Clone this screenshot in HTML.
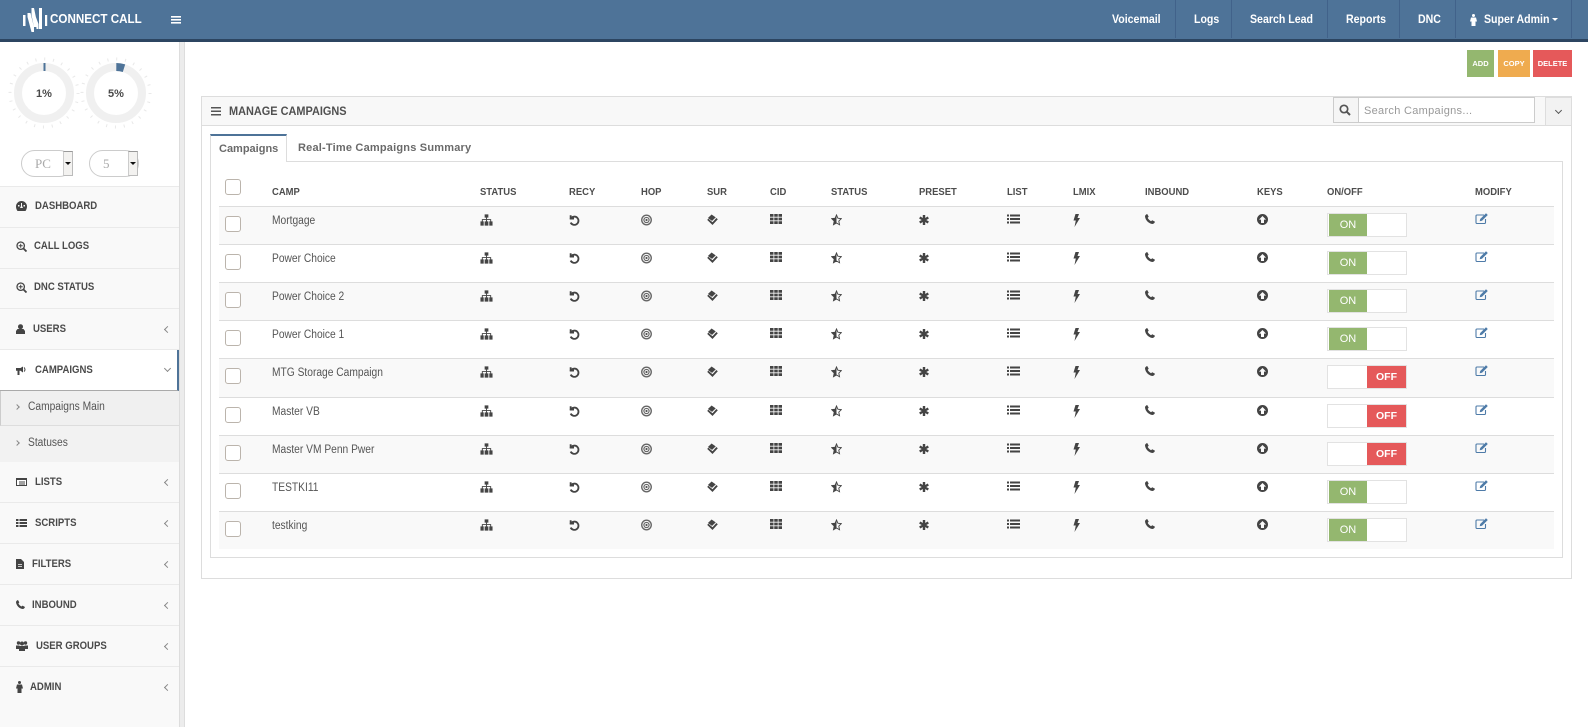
<!DOCTYPE html>
<html><head><meta charset="utf-8"><style>
*{box-sizing:border-box}
html,body{margin:0;padding:0;width:1588px;height:727px;overflow:hidden;background:#fff;font-family:"Liberation Sans",sans-serif;color:#555}
.a,.a>*{position:absolute}
.t{position:absolute;white-space:nowrap}
#top{left:0;top:0;width:1588px;height:42px;background:#4e7398;border-bottom:3px solid #2c4561}
.nv{top:13px;color:#fff;font-weight:bold;font-size:11.5px;line-height:15px;white-space:nowrap;transform:scaleX(.92);transform-origin:left}
.ns{top:0;width:1px;height:38px;background:#41628a}
#side{left:0;top:42px;width:179px;height:685px;background:#fff}
.sb{position:absolute;left:179px;top:42px;width:6px;height:685px;background:#ececec;border-left:1px solid #ddd;border-right:1px solid #ddd}
.m{position:absolute;left:0;width:179px;background:#f9f9f9;border-bottom:1px solid #eaeaea}
.mt{position:absolute;font-weight:bold;font-size:11px;color:#4a4a4a;white-space:nowrap;line-height:14px;transform:scaleX(.87);transform-origin:left}
.ch{position:absolute;left:165px;width:5px;height:5px;border-left:1px solid #888;border-bottom:1px solid #888;transform:rotate(45deg)}
.btn{position:absolute;top:50px;height:27px;color:#fff;font-weight:bold;font-size:7.5px;line-height:27px;text-align:center}
.th{position:absolute;top:185px;font-weight:bold;font-size:10.5px;line-height:14px;color:#4d4d4d;white-space:nowrap;transform:scaleX(.9);transform-origin:left}
.r{position:absolute;left:219px;width:1335px;height:38px;border-top:1px solid #ddd}
.o{background:#f9f9f9}
.r>*{position:absolute}
.cb{left:6px;top:9px;width:16px;height:16px;border:1px solid #bbb4ac;border-radius:3px;background:#fff}
.n{left:53px;top:7px;font-size:11.5px;line-height:14px;color:#555;white-space:nowrap;transform:scaleX(.89);transform-origin:left}
.sm{font-size:11.5px;line-height:14px;color:#555;transform:scaleX(.89);transform-origin:left}
.r svg{top:7px;fill:#444}
.tg{left:1108px;top:6px;width:80px;height:24px;border:1px solid #e2e2e2;background:#fff}
.tg b{position:absolute;top:0;height:22px;line-height:22px;text-align:center;font-size:11px;color:#fff;font-weight:normal}
.on b{left:1px;width:38px;background:#94b76f}
.off b{left:39px;width:39px;background:#e5595a;font-weight:bold;font-size:10.5px}
</style></head><body>
<svg width="0" height="0" style="position:absolute">
<symbol id="i1" viewBox="0 0 14 12"><path d="M5 0h4v3.500H7.500V5H12v2.500h1.500V12h-3.500V7.500h1V6H7.500v1.500H9V12H5V7.500h1.500V6H3v1.500h1V12H.5V7.500H2V5h4.500V3.500H5z"/></symbol>
<symbol id="i2" viewBox="0 0 12 12"><path d="M1.800 .8v3.600h3.600L2.300 4A4.500 4.500 0 1 1 1.800 8.800" fill="none" stroke="#444" stroke-width="2"/></symbol>
<symbol id="i3" viewBox="0 0 12 12"><circle cx="6" cy="6" r="5.200" fill="none" stroke="#666" stroke-width="1.500"/><circle cx="6" cy="6" r="2.800" fill="none" stroke="#666" stroke-width="1.300"/><circle cx="6" cy="6" r="1.200" fill="#555"/></symbol>
<symbol id="i4" viewBox="0 0 12 12"><path d="M5 0 9.500 3.200 5.500 7 1 3.800zM10.200 3.800 11.800 5.200 6 11.500 .2 5.800 1.500 4.600 6 8.400z" fill="#444"/></symbol>
<symbol id="i5" viewBox="0 0 12 10"><path d="M0 0h3.500v2.800H0zM4.250 0h3.500v2.800h-3.500zM8.500 0H12v2.800H8.500zM0 3.600h3.500v2.800H0zM4.250 3.600h3.500v2.800h-3.500zM8.500 3.600H12v2.800H8.500zM0 7.200h3.500V10H0zM4.250 7.200h3.500V10h-3.500zM8.500 7.200H12V10H8.500z"/></symbol>
<symbol id="i6" viewBox="0 0 12 12"><path d="M6 .5 7.500 4 11.300 4.500 8.500 7.200 9.300 11.200 6 9.300 2.700 11.200 3.500 7.200 .7 4.500 4.500 4z" fill="none" stroke="#444" stroke-width="1"/><path d="M6 .5V9.300L2.700 11.200 3.500 7.200 .7 4.500 4.500 4z"/></symbol>
<symbol id="i7" viewBox="0 0 10 10"><path d="M5 0v10M.7 2.500l8.600 5M9.300 2.500.7 7.500" stroke="#444" stroke-width="2.400" fill="none"/></symbol>
<symbol id="i8" viewBox="0 0 13 10"><path d="M0 .5h2v2H0zM3 .5h10v2H3zM0 4h2v2H0zM3 4h10v2H3zM0 7.500h2v2H0zM3 7.500h10v2H3z"/></symbol>
<symbol id="i9" viewBox="0 0 7 13"><path d="M2.500 0H6L4.500 4H7L1.500 13l1.300-6.500H.5z"/></symbol>
<symbol id="i10" viewBox="0 0 10 10"><path d="M2.200 0 3.700 2.600 2.700 3.900C3.400 5.300 4.600 6.500 6 7.200L7.300 6.200 10 7.800C9.600 9 8.700 10 7.500 10 3.500 9.500 .5 6.300 0 2.500 0 1.300 1 .4 2.200 0z"/></symbol>
<symbol id="i11" viewBox="0 0 11 11"><path fill-rule="evenodd" d="M5.500 0a5.500 5.500 0 1 1 0 11 5.500 5.500 0 0 1 0-11zM5.500 2 2 5.600h2V9h3V5.600h2z"/></symbol>
<symbol id="i12" viewBox="0 0 13 11"><path d="M9 2H2a1 1 0 0 0-1 1v6.500a1 1 0 0 0 1 1h7.500a1 1 0 0 0 1-1V6" fill="none" stroke="#4e7ba8" stroke-width="1.100"/><path d="M11 .3 12.800 2 7 7.800 4.700 8.300 5.200 6z" fill="#4e7ba8"/></symbol>
</svg>

<div id="top" class="a">
<svg style="left:21px;top:6px" width="28" height="26" viewBox="0 0 28 26" fill="#fff"><rect x="2" y="9" width="2.500" height="11"/><path d="M6.500 7h3l3.500 14v5h-2.500L6.500 11zM10.500 2h2.500l2.500 12v7h-2.500L10.500 9zM14.500 10l3 8v5h-2z"/><rect x="18" y="2" width="3" height="21"/><rect x="24" y="9" width="2.200" height="11"/></svg>
<div class="t" style="left:50px;top:11px;color:#fff;font-weight:bold;font-size:12.500px;line-height:16px;transform:scaleX(.93);transform-origin:left">CONNECT CALL</div>
<svg style="left:171px;top:16px" width="10" height="8" viewBox="0 0 10 8" fill="#fff"><rect width="10" height="1.600"/><rect y="3" width="10" height="1.600"/><rect y="6" width="10" height="1.600"/></svg>
<div class="nv" style="left:1112px">Voicemail</div><div class="ns" style="left:1175px"></div>
<div class="nv" style="left:1194px">Logs</div><div class="ns" style="left:1231px"></div>
<div class="nv" style="left:1250px">Search Lead</div><div class="ns" style="left:1327px"></div>
<div class="nv" style="left:1346px">Reports</div><div class="ns" style="left:1399px"></div>
<div class="nv" style="left:1418px">DNC</div><div class="ns" style="left:1455px"></div>
<svg style="left:1470px;top:14px" width="7" height="12" viewBox="0 0 7 12" fill="#fff"><circle cx="3.500" cy="1.500" r="1.500"/><path d="M1 3.500h5l1 4H5.500V12h-4V7.500H0z"/></svg>
<div class="nv" style="left:1484px">Super Admin</div>
<div style="left:1552px;top:18px;border:3px solid transparent;border-top-color:#fff;border-bottom:0"></div>
<div class="ns" style="left:1571px"></div>
</div>

<div id="side"></div><div class="sb"></div>
<svg style="position:absolute;left:0;top:50px" width="170" height="90" viewBox="0 0 170 90">
<g fill="none"><circle cx="44" cy="43" r="26" stroke="#f0f0f0" stroke-width="8"/><circle cx="116" cy="43" r="26" stroke="#f0f0f0" stroke-width="8"/>
<circle cx="44" cy="43" r="34" stroke="#e8e8e8" stroke-width="3" stroke-dasharray="1 7.900"/><circle cx="116" cy="43" r="34" stroke="#e8e8e8" stroke-width="3" stroke-dasharray="1 7.900"/>
<path d="M44.500 13v8" stroke="#4e7398" stroke-width="2"/><path d="M116.300 17a26 26 0 0 1 7.700 1.200" stroke="#4e7398" stroke-width="8"/></g>
<text x="44" y="47" text-anchor="middle" font-family="Liberation Sans" font-weight="bold" font-size="11" fill="#4a4a4a">1%</text>
<text x="116" y="47" text-anchor="middle" font-family="Liberation Sans" font-weight="bold" font-size="11" fill="#4a4a4a">5%</text>
</svg>
<div class="t" style="left:21px;top:150px;width:52px;height:27px;border:1px solid #ccc;border-radius:14px;background:#fff;color:#aaa;font-family:'Liberation Serif',serif;font-size:13px;line-height:25px;padding-left:13px">PC</div>
<div class="t" style="left:63px;top:151px;width:10px;height:25px;background:#f3f2f0;border:1px solid #bbb;border-top-color:#999;border-left:1px solid #ccc"><div style="position:absolute;left:1px;top:10px;border:3px solid transparent;border-top:3px solid #111;border-bottom:0"></div></div>
<div class="t" style="left:89px;top:150px;width:50px;height:27px;border:1px solid #ccc;border-radius:14px;background:#fff;color:#aaa;font-family:'Liberation Serif',serif;font-size:13px;line-height:25px;padding-left:13px">5</div>
<div class="t" style="left:128px;top:151px;width:10px;height:25px;background:#f3f2f0;border:1px solid #bbb;border-top-color:#999;border-left:1px solid #ccc"><div style="position:absolute;left:1px;top:10px;border:3px solid transparent;border-top:3px solid #111;border-bottom:0"></div></div>

<div class="m" style="top:186px;height:42px;border-top:1px solid #eaeaea"></div>
<div class="m" style="top:228px;height:41px"></div>
<div class="m" style="top:269px;height:40px"></div>
<div class="m" style="top:309px;height:41px"></div>
<div class="m" style="top:350px;height:41px;background:#fff;border-right:2px solid #4e7398;border-bottom:1px solid #aaa"></div>
<div class="m" style="top:391px;height:35px;background:#f0f0f0;border-left:1px solid #ccc;border-bottom:1px solid #ddd"></div>
<div class="m" style="top:426px;height:36px;background:#f2f2f2;border-bottom:0"></div>
<div class="m" style="top:462px;height:41px"></div>
<div class="m" style="top:503px;height:41px"></div>
<div class="m" style="top:544px;height:41px"></div>
<div class="m" style="top:585px;height:41px"></div>
<div class="m" style="top:626px;height:41px"></div>
<div class="m" style="top:667px;height:60px;border-bottom:0"></div>

<div class="a" style="left:0;top:0">
<svg style="left:16px;top:201px" width="11" height="10" viewBox="0 0 11 10" fill="#444"><path fill-rule="evenodd" d="M5.500 0a5.500 5.500 0 0 1 5.500 5.500c0 1.700-.6 3.300-1.500 4.500h-8C.6 8.800 0 7.200 0 5.500A5.500 5.500 0 0 1 5.500 0zM5 2v3l-1 2h3L6 5V2zM2 4v1.500h1.500V4zM7.500 4v1.500H9V4z"/></svg>
<svg style="left:16px;top:241px" width="11" height="11" viewBox="0 0 11 11" fill="none" stroke="#444"><circle cx="4.700" cy="4.700" r="3.700" stroke-width="1.300"/><path d="M7.500 7.500 10.500 10.500" stroke-width="1.800"/><path d="M4.700 2.700v4M2.700 4.700h4"/></svg>
<svg style="left:16px;top:282px" width="11" height="11" viewBox="0 0 11 11" fill="none" stroke="#444"><circle cx="4.700" cy="4.700" r="3.700" stroke-width="1.300"/><path d="M7.500 7.500 10.500 10.500" stroke-width="1.800"/><path d="M4.700 2.700v4M2.700 4.700h4"/></svg>
<svg style="left:16px;top:324px" width="9" height="10" viewBox="0 0 9 10" fill="#444"><circle cx="4.500" cy="2.700" r="2.500"/><path d="M1.500 5h6L9 7v3H0V7z"/></svg>
<svg style="left:16px;top:366px" width="11" height="9" viewBox="0 0 11 9" fill="#444"><path d="M0 2h4.500L7 .5v6L4.500 4.800H3.500V9h-2V4.800H0z"/><path d="M8 1.500a2.500 2.500 0 0 1 0 4" fill="none" stroke="#444"/></svg>
<svg style="left:16px;top:478px" width="11" height="8" viewBox="0 0 11 8"><rect x=".5" y=".5" width="10" height="7" fill="#fff" stroke="#444"/><path d="M0 0h11v2H0zM3 3.500h6v1H3zM3 5.500h6v1H3z" fill="#444"/></svg>
<svg style="left:16px;top:519px" width="11" height="8" viewBox="0 0 11 8" fill="#444"><path d="M0 0h2.500v2H0zM3.500 0H11v2H3.500zM0 3h2.500v2H0zM3.500 3H11v2H3.500zM0 6h2.500v2H0zM3.500 6H11v2H3.500z"/></svg>
<svg style="left:16px;top:559px" width="8" height="10" viewBox="0 0 8 10" fill="#444"><path d="M0 0h5l3 3v7H0z"/><path d="M2 5h4v.800H2zM2 7h4v.800H2z" fill="#f9f9f9"/></svg>
<svg style="left:16px;top:600px" width="9" height="9" viewBox="0 0 10 10" fill="#444"><use href="#i10"/></svg>
<svg style="left:16px;top:641px" width="12" height="10" viewBox="0 0 12 10" fill="#444"><circle cx="2.500" cy="2" r="1.700"/><circle cx="9.500" cy="2" r="1.700"/><circle cx="6" cy="2.500" r="2"/><path d="M0 4.500h3.500V8H0zM8.500 4.500H12V8H8.500zM3 5h6v5H3z"/></svg>
<svg style="left:16px;top:681px" width="7" height="12" viewBox="0 0 7 12" fill="#444"><circle cx="3.500" cy="1.500" r="1.500"/><path d="M1 3.500h5l1 4H5.500V12h-4V7.500H0z"/></svg>
</div>
<div class="mt" style="left:35px;top:199px">DASHBOARD</div>
<div class="mt" style="left:34px;top:239px">CALL LOGS</div>
<div class="mt" style="left:34px;top:280px">DNC STATUS</div>
<div class="mt" style="left:33px;top:322px">USERS</div><div class="ch" style="top:327px"></div>
<div class="mt" style="left:35px;top:363px">CAMPAIGNS</div><div class="ch" style="top:366px;transform:rotate(-45deg)"></div>
<div class="t sm" style="left:28px;top:400px">Campaigns Main</div>
<div class="ch" style="left:15px;top:405px;width:4px;height:4px;transform:rotate(225deg)"></div>
<div class="t sm" style="left:28px;top:436px">Statuses</div>
<div class="ch" style="left:15px;top:441px;width:4px;height:4px;transform:rotate(225deg)"></div>
<div class="mt" style="left:35px;top:475px">LISTS</div><div class="ch" style="top:480px"></div>
<div class="mt" style="left:35px;top:516px">SCRIPTS</div><div class="ch" style="top:521px"></div>
<div class="mt" style="left:32px;top:557px">FILTERS</div><div class="ch" style="top:562px"></div>
<div class="mt" style="left:32px;top:598px">INBOUND</div><div class="ch" style="top:603px"></div>
<div class="mt" style="left:36px;top:639px">USER GROUPS</div><div class="ch" style="top:644px"></div>
<div class="mt" style="left:30px;top:680px">ADMIN</div><div class="ch" style="top:685px"></div>

<div class="btn" style="left:1467px;width:27px;background:#94b76f">ADD</div>
<div class="btn" style="left:1498px;width:32px;background:#efab4f">COPY</div>
<div class="btn" style="left:1533px;width:39px;background:#e5595a">DELETE</div>

<div class="t" style="left:201px;top:96px;width:1371px;height:483px;border:1px solid #ddd;background:#fff"></div>
<div class="t" style="left:202px;top:97px;width:1369px;height:29px;background:#f8f8f8;border-bottom:1px solid #ddd"></div>
<svg style="position:absolute;left:211px;top:107px" width="10" height="9" viewBox="0 0 10 9" fill="#555"><rect width="10" height="1.500"/><rect y="3.500" width="10" height="1.500"/><rect y="7" width="10" height="1.500"/></svg>
<div class="t" style="left:229px;top:105px;font-weight:bold;font-size:11.500px;line-height:15px;color:#505050;transform:scaleX(.95);transform-origin:left">MANAGE CAMPAIGNS</div>
<div class="t" style="left:1333px;top:97px;width:26px;height:26px;background:#f5f5f5;border:1px solid #ccc"></div>
<svg style="position:absolute;left:1339px;top:104px" width="12" height="12" viewBox="0 0 12 12" fill="none" stroke="#555"><circle cx="5" cy="5" r="3.700" stroke-width="1.700"/><path d="M7.800 7.800 11 11" stroke-width="2"/></svg>
<div class="t" style="left:1358px;top:97px;width:177px;height:26px;background:#fff;border:1px solid #ccc;font-size:11px;letter-spacing:.3px;line-height:26px;color:#999;padding-left:5px">Search Campaigns...</div>
<div class="t" style="left:1545px;top:97px;width:27px;height:29px;background:#f2f2f2;border:1px solid #ddd"></div>
<div class="ch" style="left:1556px;top:108px;width:5px;height:5px;transform:rotate(-45deg);border-color:#555"></div>

<div class="t" style="left:210px;top:161px;width:1353px;height:397px;border:1px solid #ddd;background:#fff"></div>
<div class="t" style="left:210px;top:134px;width:77px;height:28px;background:#fff;border:1px solid #ddd;border-top:2px solid #4e7398;border-bottom:0;font-weight:bold;font-size:11px;line-height:26px;color:#6a6a6a;padding-left:8px">Campaigns</div>
<div class="t" style="left:298px;top:141px;font-weight:bold;font-size:11px;letter-spacing:.2px;line-height:15px;color:#6a6a6a">Real-Time Campaigns Summary</div>

<div class="t" style="left:225px;top:179px;width:16px;height:16px;border:1px solid #bbb4ac;border-radius:3px;background:#fff"></div>
<div class="th" style="left:272px">CAMP</div><div class="th" style="left:480px">STATUS</div><div class="th" style="left:569px">RECY</div><div class="th" style="left:641px">HOP</div><div class="th" style="left:707px">SUR</div><div class="th" style="left:770px">CID</div><div class="th" style="left:831px">STATUS</div><div class="th" style="left:919px">PRESET</div><div class="th" style="left:1007px">LIST</div><div class="th" style="left:1073px">LMIX</div><div class="th" style="left:1145px">INBOUND</div><div class="th" style="left:1257px">KEYS</div><div class="th" style="left:1327px">ON/OFF</div><div class="th" style="left:1475px">MODIFY</div>

<div class="r o" style="top:206px"><i class="cb"></i><span class="n">Mortgage</span><svg style="left:261px" width="13" height="12"><use href="#i1"/></svg><svg style="left:350px" width="11" height="12"><use href="#i2"/></svg><svg style="left:422px" width="11" height="12"><use href="#i3"/></svg><svg style="left:488px" width="11" height="12"><use href="#i4"/></svg><svg style="left:551px" width="12" height="10"><use href="#i5"/></svg><svg style="left:612px" width="11" height="12"><use href="#i6"/></svg><svg style="left:700px;top:8px" width="10" height="10"><use href="#i7"/></svg><svg style="left:788px" width="13" height="10"><use href="#i8"/></svg><svg style="left:854px" width="7" height="13"><use href="#i9"/></svg><svg style="left:926px" width="10" height="10"><use href="#i10"/></svg><svg style="left:1038px" width="11" height="11"><use href="#i11"/></svg><div class="tg on"><b>ON</b></div><svg style="left:1256px;top:6px" width="13" height="11"><use href="#i12"/></svg></div>
<div class="r" style="top:244px"><i class="cb"></i><span class="n">Power Choice</span><svg style="left:261px" width="13" height="12"><use href="#i1"/></svg><svg style="left:350px" width="11" height="12"><use href="#i2"/></svg><svg style="left:422px" width="11" height="12"><use href="#i3"/></svg><svg style="left:488px" width="11" height="12"><use href="#i4"/></svg><svg style="left:551px" width="12" height="10"><use href="#i5"/></svg><svg style="left:612px" width="11" height="12"><use href="#i6"/></svg><svg style="left:700px;top:8px" width="10" height="10"><use href="#i7"/></svg><svg style="left:788px" width="13" height="10"><use href="#i8"/></svg><svg style="left:854px" width="7" height="13"><use href="#i9"/></svg><svg style="left:926px" width="10" height="10"><use href="#i10"/></svg><svg style="left:1038px" width="11" height="11"><use href="#i11"/></svg><div class="tg on"><b>ON</b></div><svg style="left:1256px;top:6px" width="13" height="11"><use href="#i12"/></svg></div>
<div class="r o" style="top:282px"><i class="cb"></i><span class="n">Power Choice 2</span><svg style="left:261px" width="13" height="12"><use href="#i1"/></svg><svg style="left:350px" width="11" height="12"><use href="#i2"/></svg><svg style="left:422px" width="11" height="12"><use href="#i3"/></svg><svg style="left:488px" width="11" height="12"><use href="#i4"/></svg><svg style="left:551px" width="12" height="10"><use href="#i5"/></svg><svg style="left:612px" width="11" height="12"><use href="#i6"/></svg><svg style="left:700px;top:8px" width="10" height="10"><use href="#i7"/></svg><svg style="left:788px" width="13" height="10"><use href="#i8"/></svg><svg style="left:854px" width="7" height="13"><use href="#i9"/></svg><svg style="left:926px" width="10" height="10"><use href="#i10"/></svg><svg style="left:1038px" width="11" height="11"><use href="#i11"/></svg><div class="tg on"><b>ON</b></div><svg style="left:1256px;top:6px" width="13" height="11"><use href="#i12"/></svg></div>
<div class="r" style="top:320px"><i class="cb"></i><span class="n">Power Choice 1</span><svg style="left:261px" width="13" height="12"><use href="#i1"/></svg><svg style="left:350px" width="11" height="12"><use href="#i2"/></svg><svg style="left:422px" width="11" height="12"><use href="#i3"/></svg><svg style="left:488px" width="11" height="12"><use href="#i4"/></svg><svg style="left:551px" width="12" height="10"><use href="#i5"/></svg><svg style="left:612px" width="11" height="12"><use href="#i6"/></svg><svg style="left:700px;top:8px" width="10" height="10"><use href="#i7"/></svg><svg style="left:788px" width="13" height="10"><use href="#i8"/></svg><svg style="left:854px" width="7" height="13"><use href="#i9"/></svg><svg style="left:926px" width="10" height="10"><use href="#i10"/></svg><svg style="left:1038px" width="11" height="11"><use href="#i11"/></svg><div class="tg on"><b>ON</b></div><svg style="left:1256px;top:6px" width="13" height="11"><use href="#i12"/></svg></div>
<div class="r o" style="top:358px;height:39px"><i class="cb"></i><span class="n">MTG Storage Campaign</span><svg style="left:261px" width="13" height="12"><use href="#i1"/></svg><svg style="left:350px" width="11" height="12"><use href="#i2"/></svg><svg style="left:422px" width="11" height="12"><use href="#i3"/></svg><svg style="left:488px" width="11" height="12"><use href="#i4"/></svg><svg style="left:551px" width="12" height="10"><use href="#i5"/></svg><svg style="left:612px" width="11" height="12"><use href="#i6"/></svg><svg style="left:700px;top:8px" width="10" height="10"><use href="#i7"/></svg><svg style="left:788px" width="13" height="10"><use href="#i8"/></svg><svg style="left:854px" width="7" height="13"><use href="#i9"/></svg><svg style="left:926px" width="10" height="10"><use href="#i10"/></svg><svg style="left:1038px" width="11" height="11"><use href="#i11"/></svg><div class="tg off"><b>OFF</b></div><svg style="left:1256px;top:6px" width="13" height="11"><use href="#i12"/></svg></div>
<div class="r" style="top:397px"><i class="cb"></i><span class="n">Master VB</span><svg style="left:261px" width="13" height="12"><use href="#i1"/></svg><svg style="left:350px" width="11" height="12"><use href="#i2"/></svg><svg style="left:422px" width="11" height="12"><use href="#i3"/></svg><svg style="left:488px" width="11" height="12"><use href="#i4"/></svg><svg style="left:551px" width="12" height="10"><use href="#i5"/></svg><svg style="left:612px" width="11" height="12"><use href="#i6"/></svg><svg style="left:700px;top:8px" width="10" height="10"><use href="#i7"/></svg><svg style="left:788px" width="13" height="10"><use href="#i8"/></svg><svg style="left:854px" width="7" height="13"><use href="#i9"/></svg><svg style="left:926px" width="10" height="10"><use href="#i10"/></svg><svg style="left:1038px" width="11" height="11"><use href="#i11"/></svg><div class="tg off"><b>OFF</b></div><svg style="left:1256px;top:6px" width="13" height="11"><use href="#i12"/></svg></div>
<div class="r o" style="top:435px"><i class="cb"></i><span class="n">Master VM Penn Pwer</span><svg style="left:261px" width="13" height="12"><use href="#i1"/></svg><svg style="left:350px" width="11" height="12"><use href="#i2"/></svg><svg style="left:422px" width="11" height="12"><use href="#i3"/></svg><svg style="left:488px" width="11" height="12"><use href="#i4"/></svg><svg style="left:551px" width="12" height="10"><use href="#i5"/></svg><svg style="left:612px" width="11" height="12"><use href="#i6"/></svg><svg style="left:700px;top:8px" width="10" height="10"><use href="#i7"/></svg><svg style="left:788px" width="13" height="10"><use href="#i8"/></svg><svg style="left:854px" width="7" height="13"><use href="#i9"/></svg><svg style="left:926px" width="10" height="10"><use href="#i10"/></svg><svg style="left:1038px" width="11" height="11"><use href="#i11"/></svg><div class="tg off"><b>OFF</b></div><svg style="left:1256px;top:6px" width="13" height="11"><use href="#i12"/></svg></div>
<div class="r" style="top:473px"><i class="cb"></i><span class="n">TESTKI11</span><svg style="left:261px" width="13" height="12"><use href="#i1"/></svg><svg style="left:350px" width="11" height="12"><use href="#i2"/></svg><svg style="left:422px" width="11" height="12"><use href="#i3"/></svg><svg style="left:488px" width="11" height="12"><use href="#i4"/></svg><svg style="left:551px" width="12" height="10"><use href="#i5"/></svg><svg style="left:612px" width="11" height="12"><use href="#i6"/></svg><svg style="left:700px;top:8px" width="10" height="10"><use href="#i7"/></svg><svg style="left:788px" width="13" height="10"><use href="#i8"/></svg><svg style="left:854px" width="7" height="13"><use href="#i9"/></svg><svg style="left:926px" width="10" height="10"><use href="#i10"/></svg><svg style="left:1038px" width="11" height="11"><use href="#i11"/></svg><div class="tg on"><b>ON</b></div><svg style="left:1256px;top:6px" width="13" height="11"><use href="#i12"/></svg></div>
<div class="r o" style="top:511px"><i class="cb"></i><span class="n">testking</span><svg style="left:261px" width="13" height="12"><use href="#i1"/></svg><svg style="left:350px" width="11" height="12"><use href="#i2"/></svg><svg style="left:422px" width="11" height="12"><use href="#i3"/></svg><svg style="left:488px" width="11" height="12"><use href="#i4"/></svg><svg style="left:551px" width="12" height="10"><use href="#i5"/></svg><svg style="left:612px" width="11" height="12"><use href="#i6"/></svg><svg style="left:700px;top:8px" width="10" height="10"><use href="#i7"/></svg><svg style="left:788px" width="13" height="10"><use href="#i8"/></svg><svg style="left:854px" width="7" height="13"><use href="#i9"/></svg><svg style="left:926px" width="10" height="10"><use href="#i10"/></svg><svg style="left:1038px" width="11" height="11"><use href="#i11"/></svg><div class="tg on"><b>ON</b></div><svg style="left:1256px;top:6px" width="13" height="11"><use href="#i12"/></svg></div>
</body></html>
